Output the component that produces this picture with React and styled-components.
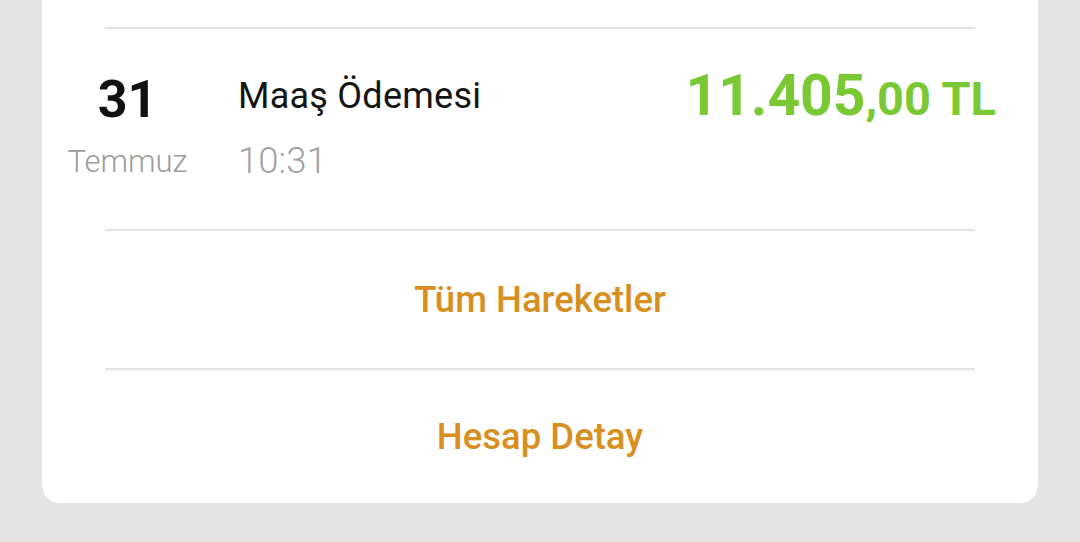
import styled, { createGlobalStyle } from "styled-components"

const GlobalStyle = createGlobalStyle`
    html, body { margin: 0; padding: 0; }
    body {
        background: #e4e4e4;
        font-family: Roboto, "Noto Sans", "Liberation Sans", sans-serif;
    }
`;

const Page = styled.main`
    min-height: 542px;
    box-sizing: border-box;
    padding: 0 42px 39px;   // card sits 42px from each side
`;

const Card = styled.section`
    background: #fff;
    border-radius: 0 0 18px 18px;
    padding-top: 27px;
`;

const Divider = styled.hr`
    margin: 0 63px;
    border: 0;
    height: 2px;
    background: #e3e3e3;
`;

const TxRow = styled.div`
    height: 200px;
    box-sizing: border-box;
    padding: 38px 42px 0 25px;
    display: flex;
    align-items: flex-start;
`;

const DateCol = styled.div`
    width: 121px;
    margin-top: 7px;
    display: flex;
    flex-direction: column;
    align-items: center;
    gap: 20px;
`;

const Day = styled.span`
    font-size: 52px;
    font-weight: 700;
    line-height: 1;
    color: #111;
`;

const Month = styled.span`
    font-size: 31px;
    font-weight: 300;
    line-height: 1;
    color: #9c9c9c;
`;

const Info = styled.div`
    margin: 11px 0 0 50px;
    display: flex;
    flex-direction: column;
    gap: 29px;
`;

const Title = styled.span`
    font-size: 36px;
    font-weight: 400;
    line-height: 1;
    letter-spacing: 0.25px;
    color: #141414;
`;

const Time = styled.span`
    font-size: 36.5px;
    font-weight: 300;
    line-height: 1;
    color: #a2a2a2;
`;

const Amount = styled.div`
    margin-left: auto;
    font-size: 57px;
    font-weight: 700;
    line-height: 1;
    color: #7ac934;
    white-space: nowrap;
`;

const Fraction = styled.span`
    font-size: 47px;
`;

const ActionRow = styled.button`
    display: flex;
    width: 100%;
    height: ${({ $h }) => $h}px;
    align-items: center;
    justify-content: center;
    border: 0;
    background: none;
    padding: 0;
    font-family: inherit;
    font-size: 36.5px;
    font-weight: 500;
    color: #d7901f;
    cursor: pointer;
`;

const App = () => {
    return (
        <>
            <GlobalStyle />
            <Page>
                <Card>
                    <Divider />
                    <TxRow>
                        <DateCol>
                            <Day>31</Day>
                            <Month>Temmuz</Month>
                        </DateCol>
                        <Info>
                            <Title>Maaş Ödemesi</Title>
                            <Time>10:31</Time>
                        </Info>
                        <Amount>11.405<Fraction>,00 TL</Fraction></Amount>
                    </TxRow>
                    <Divider />
                    <ActionRow $h={137}>Tüm Hareketler</ActionRow>
                    <Divider />
                    <ActionRow $h={133}>Hesap Detay</ActionRow>
                </Card>
            </Page>
        </>
    )
}

export default App
